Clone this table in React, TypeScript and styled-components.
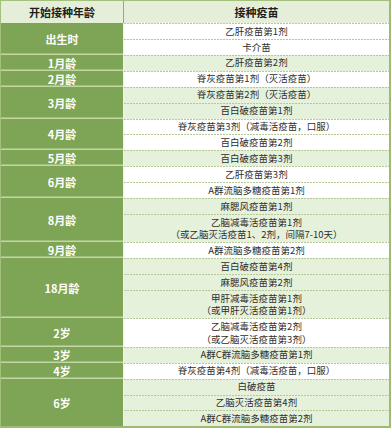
import React from "react";
import styled, { createGlobalStyle } from "styled-components";

const Global = createGlobalStyle`
  html, body { margin: 0; padding: 0; background: #ffffff; }
  body { font-family: "Noto Sans CJK SC", "Noto Sans", sans-serif; }
`;

type Item = { lines: string[] };
type Group = { age: string; items: Item[] };

const data: Group[] = [
  { age: "出生时", items: [{ lines: ["乙肝疫苗第1剂"] }, { lines: ["卡介苗"] }] },
  { age: "1月龄", items: [{ lines: ["乙肝疫苗第2剂"] }] },
  { age: "2月龄", items: [{ lines: ["脊灰疫苗第1剂（灭活疫苗）"] }] },
  { age: "3月龄", items: [{ lines: ["脊灰疫苗第2剂（灭活疫苗）"] }, { lines: ["百白破疫苗第1剂"] }] },
  { age: "4月龄", items: [{ lines: ["脊灰疫苗第3剂（减毒活疫苗，口服）"] }, { lines: ["百白破疫苗第2剂"] }] },
  { age: "5月龄", items: [{ lines: ["百白破疫苗第3剂"] }] },
  { age: "6月龄", items: [{ lines: ["乙肝疫苗第3剂"] }, { lines: ["A群流脑多糖疫苗第1剂"] }] },
  {
    age: "8月龄",
    items: [
      { lines: ["麻腮风疫苗第1剂"] },
      { lines: ["乙脑减毒活疫苗第1剂", "（或乙脑灭活疫苗1、2剂，间隔7-10天）"] },
    ],
  },
  { age: "9月龄", items: [{ lines: ["A群流脑多糖疫苗第2剂"] }] },
  {
    age: "18月龄",
    items: [
      { lines: ["百白破疫苗第4剂"] },
      { lines: ["麻腮风疫苗第2剂"] },
      { lines: ["甲肝减毒活疫苗第1剂", "（或甲肝灭活疫苗第1剂）"] },
    ],
  },
  { age: "2岁", items: [{ lines: ["乙脑减毒活疫苗第2剂", "（或乙脑灭活疫苗第3剂）"] }] },
  { age: "3岁", items: [{ lines: ["A群C群流脑多糖疫苗第1剂"] }] },
  { age: "4岁", items: [{ lines: ["脊灰疫苗第4剂（减毒活疫苗，口服）"] }] },
  {
    age: "6岁",
    items: [{ lines: ["白破疫苗"] }, { lines: ["乙脑灭活疫苗第4剂"] }, { lines: ["A群C群流脑多糖疫苗第2剂"] }],
  },
];

const Table = styled.div`
  width: 391px;
  box-sizing: border-box;
  border-top: 1px solid #a3c07c;
  border-left: 1px solid #a3c07c;
  border-right: 2px solid #9dbb72;
  border-bottom: 2px solid #9dbb72;
  display: flex;
  flex-direction: column;
`;

const HeaderRow = styled.div`
  display: grid;
  grid-template-columns: 123px 1fr;
  height: 22px;
  background: #e4eed8;
`;

const HeaderCell = styled.div<{ $divider?: boolean }>`
  display: flex;
  align-items: center;
  justify-content: center;
  font-size: 11px;
  font-weight: 700;
  color: #1e1e1e;
  border-right: ${(p) => (p.$divider ? "1px solid #8fb069" : "none")};
`;

const GroupRow = styled.div`
  display: grid;
  grid-template-columns: 123px 1fr;
`;

const AgeCell = styled.div<{ $last?: boolean }>`
  display: flex;
  align-items: center;
  justify-content: center;
  background: #7ea556;
  color: #ffffff;
  font-size: 11px;
  font-weight: 700;
  border-right: 1px solid #eef5e6;
  box-shadow: ${(p) => (p.$last ? "none" : "inset 0 -1.5px 0 #c3d7a6")};
`;

const VaccineList = styled.div<{ $alt: boolean }>`
  display: flex;
  flex-direction: column;
  background: ${(p) => (p.$alt ? "#e6f1dc" : "#ffffff")};
`;

const VaccineRow = styled.div<{ $double: boolean }>`
  height: ${(p) => (p.$double ? "28.3px" : "15.9px")};
  display: flex;
  flex-direction: column;
  align-items: center;
  justify-content: center;
  font-size: 9.5px;
  line-height: 12.5px;
  color: #2e2e2e;
  white-space: nowrap;
  text-spacing-trim: space-all;
  background-image: repeating-linear-gradient(
    to right,
    #b4c996 0px,
    #b4c996 2px,
    transparent 2px,
    transparent 3px
  );
  background-size: 100% 1px;
  background-position: left top;
  background-repeat: no-repeat;
`;

export default function App() {
  return (
    <>
      <Global />
      <Table>
        <HeaderRow>
          <HeaderCell $divider>开始接种年龄</HeaderCell>
          <HeaderCell>接种疫苗</HeaderCell>
        </HeaderRow>
        {data.map((g, gi) => (
          <GroupRow key={g.age}>
            <AgeCell $last={gi === data.length - 1}>{g.age}</AgeCell>
            <VaccineList $alt={gi % 2 === 1}>
              {g.items.map((it, ii) => (
                <VaccineRow key={ii} $double={it.lines.length > 1}>
                  {it.lines.map((l) => (
                    <span key={l}>{l}</span>
                  ))}
                </VaccineRow>
              ))}
            </VaccineList>
          </GroupRow>
        ))}
      </Table>
    </>
  );
}
